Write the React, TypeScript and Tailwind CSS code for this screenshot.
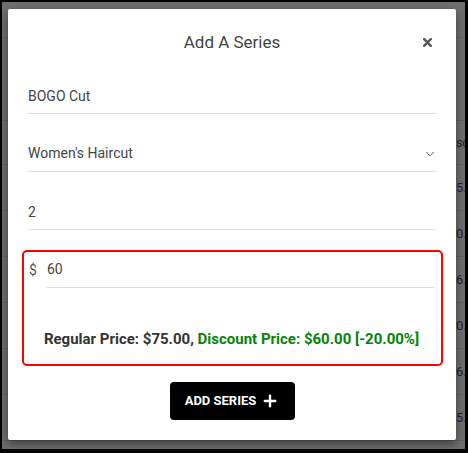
import React from 'react';
import { ChevronDown, Plus } from 'lucide-react';

// only the slivers of the table that show beside the modal
const rows = ['5.', '0.', '6.', '0.', '6.', '5.'];

const Backdrop: React.FC = () => (
  <div className="flex flex-col text-[13px] text-[#23232d]">
    <div className="h-[36px] border-b border-[#626262]" />
    <div className="h-[83px] border-b border-[#626262]" />
    <div className="h-[44px] border-b border-[#626262] flex items-center pl-[454px] whitespace-nowrap tracking-[-0.5px]">sc</div>
    {rows.map((v, i) => (
      <div key={i} className="h-[46px] border-b border-[#626262] flex items-center pl-[454px] whitespace-nowrap">
        {v}
      </div>
    ))}
  </div>
);

const Field: React.FC<{ value: string; select?: boolean; first?: boolean }> = ({ value, select, first }) => (
  <div className={`${first ? 'mt-[27px]' : 'mt-[24px]'} h-[34px] border-b border-[#dddddd] flex items-center justify-between ${select ? 'pb-[3px]' : ''}`}>
    <span className="text-[14px] text-[#444]">{value}</span>
    {select && <ChevronDown size={14} strokeWidth={1.7} className="text-[#555] mr-[-1px] mt-[2px]" />}
  </div>
);

export default function App() {
  return (
    <div
      className="w-[468px] h-[453px] bg-black pl-[2px] pt-[2px] pr-[3px] pb-[4px] flex"
      style={{ fontFamily: 'Roboto, "Liberation Sans", sans-serif' }}
    >
      <div className="relative flex-1 bg-[#6e6e6e] overflow-hidden">
        <Backdrop />

        <div className="absolute left-[6px] top-[7px] w-[448px] h-[431px] rounded-[2px] bg-white px-5 flex flex-col shadow-[0_4px_10px_rgba(0,0,0,0.45)]">
          <div className="relative h-[44px] pt-[23px]">
            <h2 className="text-center text-[17px] leading-[20px] text-[#444]">Add A Series</h2>
            <button className="absolute right-[4px] top-[29px] text-[#555]">
              <svg width="9" height="9" viewBox="0 0 9 9" fill="none" stroke="currentColor" strokeWidth="2.4" strokeLinecap="square">
                <path d="M1.2 1.2 L7.8 7.8 M7.8 1.2 L1.2 7.8" />
              </svg>
            </button>
          </div>

          <Field first value="BOGO Cut" />
          <Field select value="Women's Haircut" />
          <Field value="2" />

          <div className="mt-[20px] ml-[-6px] mr-[-7px] border-2 border-[#ff0000] rounded-[5px] pl-[5px] pr-[7px]">
            <div className="flex h-[36px]">
              <span className="w-[18px] flex items-center text-[14px] text-[#555]">$</span>
              <div className="flex-1 border-b border-[#dddddd] flex items-center text-[14px] text-[#444]">60</div>
            </div>
            <p className="mt-[41px] mb-[15px] text-center text-[15px] leading-[20px] font-bold text-[#333] whitespace-nowrap">
              Regular Price: $75.00, <span className="text-[#068306]">Discount Price: $60.00 [-20.00%]</span>
            </p>
          </div>

          <button className="mt-[16px] self-center w-[125px] h-[38px] rounded-[4px] bg-black text-white flex items-center justify-center gap-[5px] text-[13px] font-bold">
            ADD SERIES
            <Plus size={18} strokeWidth={3.2} />
          </button>
        </div>
      </div>
    </div>
  );
}
